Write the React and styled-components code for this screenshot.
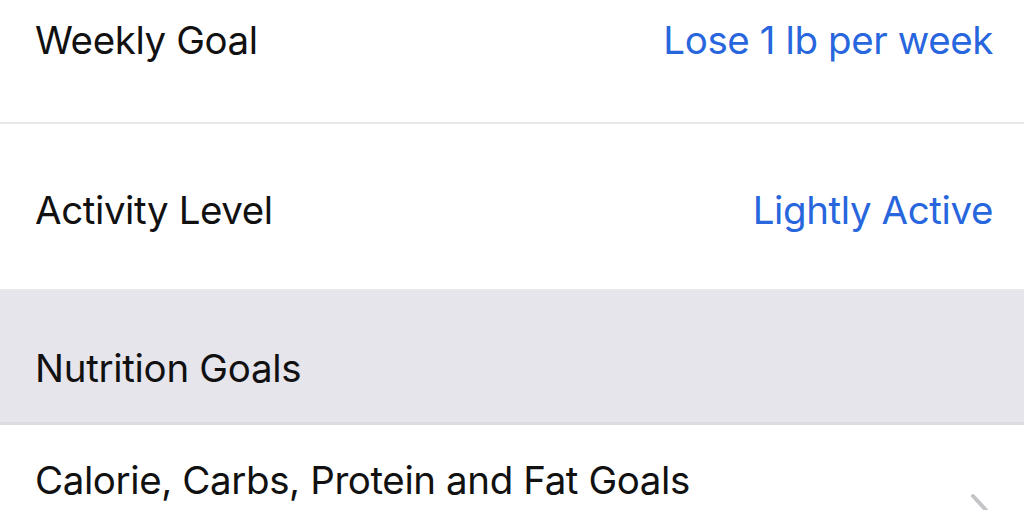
import React from "react";
import styled, { createGlobalStyle } from "styled-components";

const GlobalStyle = createGlobalStyle`
  html, body {
    margin: 0;
    padding: 0;
    background: #ffffff;
    overflow: hidden;
  }
  body {
    font-family: Inter, "Noto Sans", "Liberation Sans", sans-serif;
    -webkit-font-smoothing: antialiased;
  }
`;

const Screen = styled.div`
  width: 1024px;
  height: 510px;
  overflow: hidden;
  display: flex;
  flex-direction: column;
`;

const Row = styled.div`
  flex: none;
  box-sizing: border-box;
  height: ${(p) => p.$height}px;
  padding: ${(p) => p.$top}px 31px 0 35px;
  display: flex;
  justify-content: space-between;
  align-items: flex-start;
  background: #ffffff;
  border-bottom: ${(p) => (p.$last ? "none" : "2px solid #e8e8ea")};
`;

const Label = styled.span`
  font-size: 38.5px;
  line-height: 48px;
  color: #111111;
  letter-spacing: -0.4px;
`;

const Value = styled(Label)`
  color: #2866de;
`;

const SectionHeader = styled.div`
  flex: none;
  box-sizing: border-box;
  height: 134px;
  padding: 54px 35px 0;
  background: #e6e5ec;
  border-bottom: 3px solid #dcdbe2;
  font-size: 38.5px;
  line-height: 46px;
  color: #111111;
  letter-spacing: -0.3px;
`;

const NavRow = styled(Row)`
  padding-right: 33px;
`;

const Chevron = styled.svg`
  align-self: center;
  flex: none;
  width: 22px;
  height: 36px;
  margin-top: -28px;
`;

export default function App() {
  return (
    <>
      <GlobalStyle />
      <Screen>
        <Row $height={124} $top={16}>
          <Label>Weekly Goal</Label>
          <Value>Lose 1 lb per week</Value>
        </Row>
        <Row $height={167} $top={62}>
          <Label>Activity Level</Label>
          <Value>Lightly Active</Value>
        </Row>
        <SectionHeader>Nutrition Goals</SectionHeader>
        <NavRow $height={166} $top={31} $last>
          <Label>Calorie, Carbs, Protein and Fat Goals</Label>
          <Chevron viewBox="0 0 22 36">
            <path
              d="M4 4 L17 18 L4 32"
              fill="none"
              stroke="#c4c4c8"
              strokeWidth="4"
              strokeLinecap="round"
              strokeLinejoin="round"
            />
          </Chevron>
        </NavRow>
      </Screen>
    </>
  );
}
